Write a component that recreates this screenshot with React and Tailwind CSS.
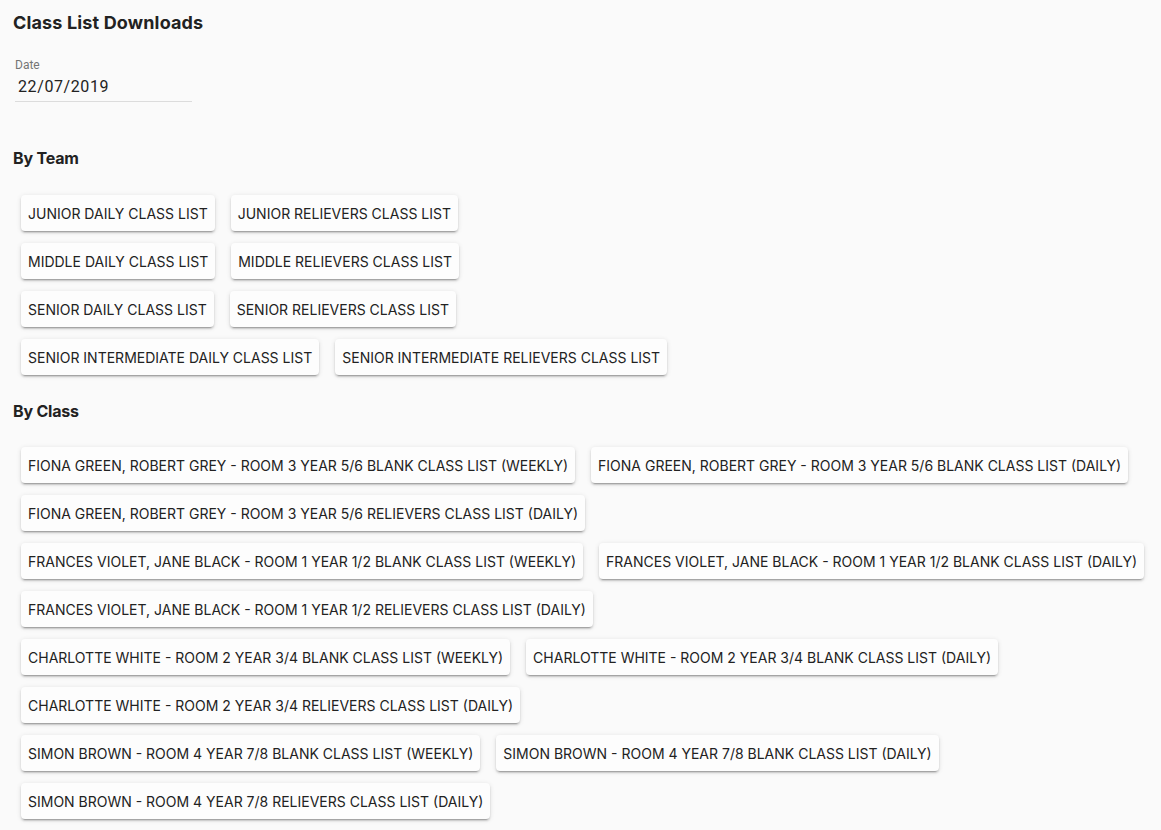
import React from 'react';

const teamGroups = [
  ['JUNIOR DAILY CLASS LIST', 'JUNIOR RELIEVERS CLASS LIST'],
  ['MIDDLE DAILY CLASS LIST', 'MIDDLE RELIEVERS CLASS LIST'],
  ['SENIOR DAILY CLASS LIST', 'SENIOR RELIEVERS CLASS LIST'],
  ['SENIOR INTERMEDIATE DAILY CLASS LIST', 'SENIOR INTERMEDIATE RELIEVERS CLASS LIST'],
];

const classes = [
  'FIONA GREEN, ROBERT GREY - ROOM 3 YEAR 5/6',
  'FRANCES VIOLET, JANE BLACK - ROOM 1 YEAR 1/2',
  'CHARLOTTE WHITE - ROOM 2 YEAR 3/4',
  'SIMON BROWN - ROOM 4 YEAR 7/8',
];

const classGroups = classes.map((c) => [
  `${c} BLANK CLASS LIST (WEEKLY)`,
  `${c} BLANK CLASS LIST (DAILY)`,
  `${c} RELIEVERS CLASS LIST (DAILY)`,
]);

const DownloadButton = ({ label }) => (
  <button
    type="button"
    className="mx-2 my-[6px] h-9 rounded bg-[#fdfdfd] px-[7px] pt-px font-['Inter',sans-serif] text-[14px] leading-none text-[#222] shadow-[0px_3px_1px_-2px_rgba(0,0,0,0.2),0px_2px_2px_0px_rgba(0,0,0,0.14),0px_1px_5px_0px_rgba(0,0,0,0.12)] whitespace-nowrap"
  >
    {label}
  </button>
);

const ButtonGroup = ({ items }) => (
  <div className="flex flex-wrap">
    {items.map((item) => (
      <DownloadButton key={item} label={item} />
    ))}
  </div>
);

export default function App() {
  return (
    <div className="min-h-screen bg-[#fafafa] pl-[13px] pt-[9px] font-['Roboto',sans-serif] text-[#222]">
      <h1 className="font-['Inter',sans-serif] text-[18px] leading-7 font-bold tracking-[0.15px] text-[#222]">
        Class List Downloads
      </h1>

      {/* Date field */}
      <div className="mt-[20px] ml-[2px] w-[177px]">
        <label className="block text-[12px] leading-4 text-[#757575]">Date</label>
        <div className="border-b border-[#dcdcdc] pt-[4px] pb-[5px] pl-[3px] text-[16px] leading-[19px] tracking-[0.6px] text-[#222]">
          22/07/2019
        </div>
      </div>

      <h2 className="mt-[44px] mb-[19px] font-['Inter',sans-serif] text-[16px] leading-6 font-bold tracking-[-0.2px]">
        By Team
      </h2>
      <div>
        {teamGroups.map((g, i) => (
          <ButtonGroup key={i} items={g} />
        ))}
      </div>

      <h2 className="mt-[18px] mb-[18px] font-['Inter',sans-serif] text-[16px] leading-6 font-bold tracking-[-0.2px]">
        By Class
      </h2>
      <div>
        {classGroups.map((g, i) => (
          <ButtonGroup key={i} items={g} />
        ))}
      </div>
    </div>
  );
}
